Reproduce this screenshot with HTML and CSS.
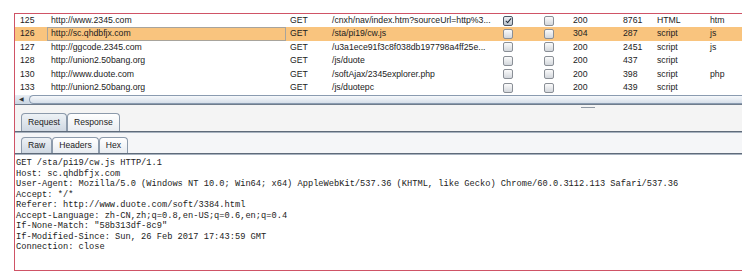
FILE: index.html
```html
<!DOCTYPE html>
<html>
<head>
<meta charset="utf-8">
<link rel="stylesheet" href="styles.css">
</head>
<body>
<div class="frame">
  <div class="table">
    <div class="row">
      <div class="c id">125</div><div class="c host">http://www.2345.com</div><div class="c m">GET</div><div class="c path">/cnxh/nav/index.htm?sourceUrl=http%3...</div>
      <div class="c cb"><span class="box checked"></span></div><div class="c cb"><span class="box"></span></div>
      <div class="c st">200</div><div class="c len">8761</div><div class="c mime">HTML</div><div class="c ext">htm</div>
    </div>
    <div class="row sel">
      <div class="c id">126</div><div class="c host focus">http://sc.qhdbfjx.com</div><div class="c m">GET</div><div class="c path">/sta/pi19/cw.js</div>
      <div class="c cb"><span class="box"></span></div><div class="c cb"><span class="box"></span></div>
      <div class="c st">304</div><div class="c len">287</div><div class="c mime">script</div><div class="c ext">js</div>
    </div>
    <div class="row">
      <div class="c id">127</div><div class="c host">http://ggcode.2345.com</div><div class="c m">GET</div><div class="c path">/u3a1ece91f3c8f038db197798a4ff25e...</div>
      <div class="c cb"><span class="box"></span></div><div class="c cb"><span class="box"></span></div>
      <div class="c st">200</div><div class="c len">2451</div><div class="c mime">script</div><div class="c ext">js</div>
    </div>
    <div class="row">
      <div class="c id">128</div><div class="c host">http://union2.50bang.org</div><div class="c m">GET</div><div class="c path">/js/duote</div>
      <div class="c cb"><span class="box"></span></div><div class="c cb"><span class="box"></span></div>
      <div class="c st">200</div><div class="c len">437</div><div class="c mime">script</div><div class="c ext"></div>
    </div>
    <div class="row">
      <div class="c id">130</div><div class="c host">http://www.duote.com</div><div class="c m">GET</div><div class="c path">/softAjax/2345explorer.php</div>
      <div class="c cb"><span class="box"></span></div><div class="c cb"><span class="box"></span></div>
      <div class="c st">200</div><div class="c len">398</div><div class="c mime">script</div><div class="c ext">php</div>
    </div>
    <div class="row">
      <div class="c id">133</div><div class="c host">http://union2.50bang.org</div><div class="c m">GET</div><div class="c path">/js/duotepc</div>
      <div class="c cb"><span class="box"></span></div><div class="c cb"><span class="box"></span></div>
      <div class="c st">200</div><div class="c len">439</div><div class="c mime">script</div><div class="c ext"></div>
    </div>
  </div>
  <div class="hscroll">
    <div class="arrow">&#9664;</div>
    <div class="thumb"></div>
  </div>
  <div class="divider"><span class="grip"></span></div>
  <div class="tabs">
    <div class="tab active">Request</div>
    <div class="tab">Response</div>
  </div>
  <div class="subtabs">
    <div class="tab small active">Raw</div>
    <div class="tab small">Headers</div>
    <div class="tab small">Hex</div>
  </div>
  <pre class="raw">GET /sta/pi19/cw.js HTTP/1.1
Host: sc.qhdbfjx.com
User-Agent: Mozilla/5.0 (Windows NT 10.0; Win64; x64) AppleWebKit/537.36 (KHTML, like Gecko) Chrome/60.0.3112.113 Safari/537.36
Accept: */*
Referer: http://www.duote.com/soft/3384.html
Accept-Language: zh-CN,zh;q=0.8,en-US;q=0.6,en;q=0.4
If-None-Match: "58b313df-8c9"
If-Modified-Since: Sun, 26 Feb 2017 17:43:59 GMT
Connection: close</pre>
</div>
</body>
</html>
```

FILE: styles.css
```css
html, body {
  margin: 0;
  padding: 0;
  background: #ffffff;
  overflow: hidden;
}

.frame {
  margin: 13px 0 0 14px;
  height: 256px;
  border-top: 1px solid #cf5366;
  border-left: 1px solid #cf5366;
  border-bottom: 1px solid #cf5366;
  display: flex;
  flex-direction: column;
  font-family: "Liberation Sans", Arial, sans-serif;
  color: #222;
}

.table {
  display: flex;
  flex-direction: column;
}

.row {
  display: grid;
  grid-template-columns: 32px 239px 42px 171px 41px 29px 50px 34px 53px 1fr;
  height: 13.4px;
  align-items: center;
  font-size: 8.7px;
  background: #ffffff;
}

.row.sel {
  background: #f9c47e;
}

.c {
  padding-left: 4px;
  white-space: nowrap;
  overflow: hidden;
  height: 13.4px;
  line-height: 13.4px;
  box-sizing: border-box;
}

.c.id {
  padding-left: 5px;
}

.c.focus {
  border: 1px solid #a8a49c;
  padding-left: 3px;
  line-height: 11.4px;
}

.c.cb {
  display: flex;
  align-items: center;
}

.box {
  width: 8px;
  height: 8px;
  border: 1px solid #8a8f96;
  border-radius: 2px;
  background: linear-gradient(#fbfbfb, #d3d7dc);
  position: relative;
}

.box.checked {
  border-color: #4d5866;
  background: linear-gradient(#eef1f5, #b9c2cd);
}

.box.checked::after {
  content: "";
  position: absolute;
  left: 2.5px;
  top: 0px;
  width: 2px;
  height: 5px;
  border-right: 1.5px solid #1d2a3a;
  border-bottom: 1.5px solid #1d2a3a;
  transform: rotate(40deg);
}

.hscroll {
  height: 9px;
  margin-top: 1px;
  display: flex;
  align-items: stretch;
  background: linear-gradient(#e9eef4, #c9d5e2);
  border-bottom: 1px solid #6f7c8c;
}

.arrow {
  width: 12px;
  font-size: 6px;
  line-height: 9px;
  text-align: center;
  color: #333;
}

.thumb {
  flex: 1;
  margin-left: 2px;
  border: 1px solid #8a9bb0;
  border-right: none;
  border-radius: 5px 0 0 5px;
  background: linear-gradient(#f6f8fb, #d6dfe9);
}

.divider {
  height: 8px;
  background: #f4f4f4;
  position: relative;
}

.grip {
  position: absolute;
  left: 566px;
  top: 2px;
  width: 14px;
  height: 1px;
  background: #8f98a3;
}

.tabs {
  display: flex;
  align-items: flex-end;
  padding-left: 6px;
  background: #f4f4f4;
  border-bottom: 1px solid #5f6b7a;
  box-shadow: 0 1px 0 #a7b2bf;
  height: 18px;
}

.tab {
  height: 18px;
  box-sizing: border-box;
  padding: 0 6px;
  font-size: 8.6px;
  line-height: 17px;
  border: 1px solid #8c9aab;
  border-bottom: none;
  border-radius: 4px 4px 0 0;
  background: linear-gradient(#ffffff, #e8ecf1);
  color: #222;
}

.tab.active {
  background: linear-gradient(#eef2f6, #cfd8e2);
}

.subtabs {
  display: flex;
  align-items: flex-end;
  padding-left: 6px;
  margin-top: 1px;
  padding-top: 4px;
  background: #f5f6f8;
  border-bottom: 1px solid #5f6b7a;
  box-shadow: 0 1px 0 #a7b2bf;
}

.tab.small {
  height: 16px;
  line-height: 15px;
  padding: 0 6px;
}

.raw {
  margin: 0;
  margin-top: 2px;
  padding: 2px 0 0 1px;
  flex: 1;
  background: #ffffff;
  font-family: "Liberation Mono", "Courier New", monospace;
  font-size: 8.7px;
  line-height: 10.5px;
  color: #222;
  white-space: pre;
  overflow: hidden;
}
```
